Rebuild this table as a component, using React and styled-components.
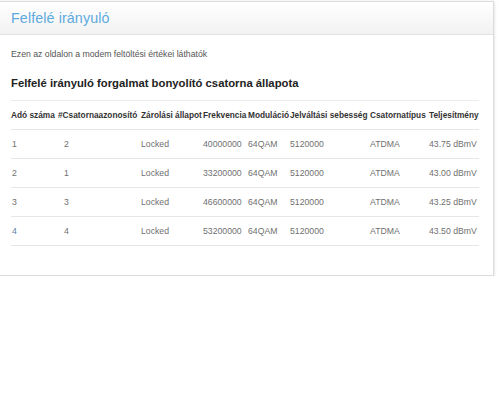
import React from 'react';
import styled, { createGlobalStyle } from 'styled-components';

const Global = createGlobalStyle`
  html, body {
    margin: 0;
    padding: 0;
    background: #fff;
    font-family: "Liberation Sans", Arial, sans-serif;
  }
`;

const Card = styled.div`
  margin: 1px 6px 0 -6px;
  border: 1px solid #dcdcdc;
  background: #fff;
  box-shadow: 0 1px 3px rgba(0, 0, 0, 0.18);
`;

const Header = styled.div`
  height: 32px;
  display: flex;
  align-items: center;
  padding-left: 16px;
  background: linear-gradient(to bottom, #ffffff 0%, #f2f2f2 100%);
  border-bottom: 1px solid #e3e3e3;
`;

const Title = styled.h1`
  margin: 0;
  font-size: 14.3px;
  font-weight: normal;
  color: #5eaadf;
  letter-spacing: 0.1px;
`;

const Body = styled.div`
  padding: 13px 15px 29px 16px;
`;

const Intro = styled.p`
  margin: 0;
  font-size: 8.7px;
  line-height: 12px;
  color: #555;
`;

const Heading = styled.h2`
  margin: 16px 0 0;
  font-size: 11.3px;
  line-height: 14px;
  font-weight: bold;
  color: #222;
`;

const Table = styled.table`
  margin-top: 10px;
  width: 468px;
  border-collapse: collapse;
  table-layout: fixed;
  border-top: 1px solid #ececec;
`;

const Th = styled.th`
  padding: 0;
  height: 28px;
  text-align: left;
  font-size: 8.3px;
  font-weight: bold;
  color: #333;
  white-space: nowrap;
  overflow: visible;
  border-bottom: 1px solid #e6e6e6;
`;

const Td = styled.td`
  padding: 0 0 0 ${(p) => p.$indent || 0}px;
  height: 28px;
  font-size: 8.7px;
  color: ${(p) => (p.$link ? '#5f7fa6' : '#707070')};
  white-space: nowrap;
  border-bottom: 1px solid #e6e6e6;
`;

const widths = [47, 83, 62, 45, 42, 80, 59, 50];
const heads = [
  'Adó száma',
  '#Csatornaazonosító',
  'Zárolási állapot',
  'Frekvencia',
  'Moduláció',
  'Jelváltási sebesség',
  'Csatornatípus',
  'Teljesítmény',
];

const rows = [
  ['1', '2', 'Locked', '40000000', '64QAM', '5120000', 'ATDMA', '43.75 dBmV'],
  ['2', '1', 'Locked', '33200000', '64QAM', '5120000', 'ATDMA', '43.00 dBmV'],
  ['3', '3', 'Locked', '46600000', '64QAM', '5120000', 'ATDMA', '43.25 dBmV'],
  ['4', '4', 'Locked', '53200000', '64QAM', '5120000', 'ATDMA', '43.50 dBmV'],
];

export default function App() {
  return (
    <>
      <Global />
      <Card>
        <Header>
          <Title>Felfelé irányuló</Title>
        </Header>
        <Body>
          <Intro>Ezen az oldalon a modem feltöltési értékei láthatók</Intro>
          <Heading>Felfelé irányuló forgalmat bonyolító csatorna állapota</Heading>
          <Table>
            <colgroup>
              {widths.map((w, i) => (
                <col key={i} style={{ width: w }} />
              ))}
            </colgroup>
            <thead>
              <tr>
                {heads.map((h) => (
                  <Th key={h}>{h}</Th>
                ))}
              </tr>
            </thead>
            <tbody>
              {rows.map((r, ri) => (
                <tr key={ri}>
                  {r.map((c, ci) => (
                    <Td
                      key={ci}
                      $indent={ci === 0 ? 1 : ci === 1 ? 6 : 0}
                      $link={ri === 3 && ci === 0}
                    >
                      {c}
                    </Td>
                  ))}
                </tr>
              ))}
            </tbody>
          </Table>
        </Body>
      </Card>
    </>
  );
}
